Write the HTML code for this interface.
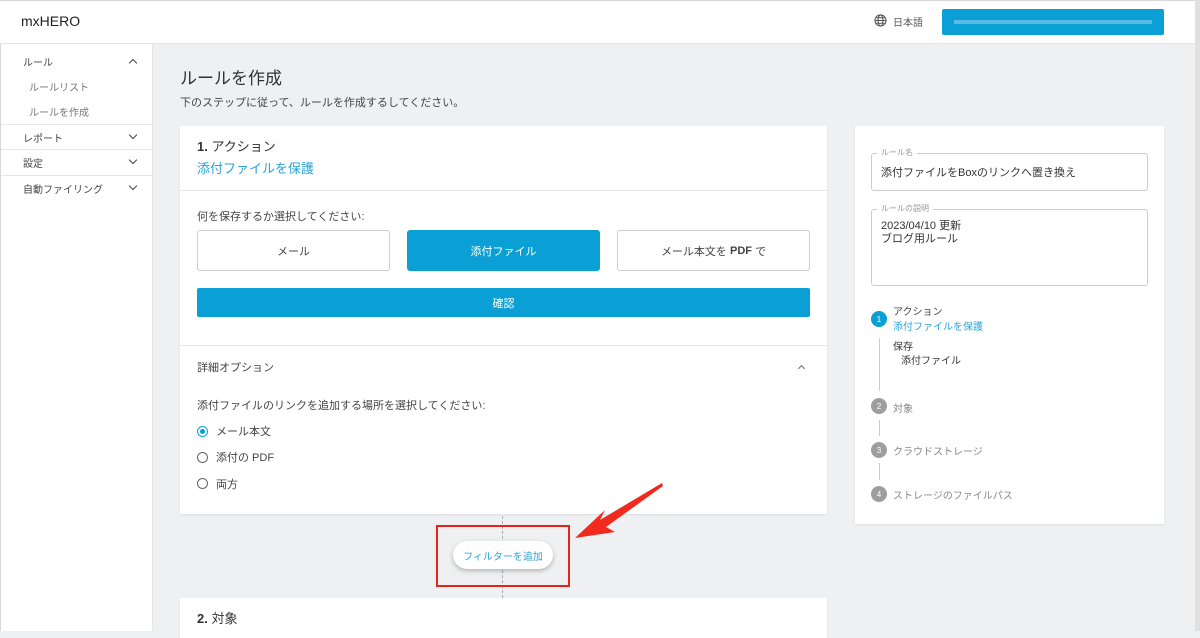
<!DOCTYPE html>
<html><head><meta charset="utf-8"><style>
*{box-sizing:border-box;margin:0;padding:0}
body{width:1200px;height:631px;overflow:hidden;background:#eef0f2;font-family:"Liberation Sans","Noto Sans CJK JP",sans-serif;color:#333;position:relative;font-size:12px}
.abs{position:absolute}
#hdr{left:0;top:0;width:1200px;height:44px;background:#fff;border-bottom:1px solid #e3e5e8;border-top:1px solid #d8d8d8}
#side{left:0;top:44px;width:153px;height:587px;background:#fff;border-right:1px solid #e3e5e8;border-left:1px solid #d8d8d8}
.si{position:absolute;left:0;width:152px;font-size:10px;color:#444}
.chev{position:absolute;right:16px;width:6px;height:6px;border-right:1.5px solid #444;border-bottom:1.5px solid #444}
.card{background:#fff;position:absolute;box-shadow:0 1px 2px rgba(0,0,0,.08)}
.btn{position:absolute;top:230px;height:41px;width:193px;border:1px solid #ccc;border-radius:3px;display:flex;align-items:center;justify-content:center;font-size:11px;color:#444;background:#fff}
.radio{position:absolute;left:197px;width:11px;height:11px;border:1.2px solid #666;border-radius:50%}
.step{position:absolute;left:871px;width:16px;height:16px;border-radius:50%;background:#9e9e9e;color:#fff;font-size:8px;display:flex;align-items:center;justify-content:center}
.sl{position:absolute;left:893px;font-size:10px;color:#888}
.vl{position:absolute;left:879px;width:1px;background:#ccc}
</style></head><body>
<div id="hdr" class="abs">
 <div class="abs" style="left:21px;top:12px;font-size:14px;color:#222">mxHERO</div>
 <svg class="abs" style="left:874px;top:13px" width="13" height="13" viewBox="0 0 14 14" fill="none" stroke="#555" stroke-width="1.1"><circle cx="7" cy="7" r="6"/><ellipse cx="7" cy="7" rx="2.6" ry="6"/><path d="M1 7h12M2 4h10M2 10h10"/></svg>
 <div class="abs" style="left:893px;top:13px;font-size:10px;color:#555">日本語</div>
 <div class="abs" style="left:942px;top:8px;width:222px;height:26px;background:#0a9fd5;border-radius:2px"><div style="margin:11px 12px;height:4px;background:#7cc8ea;opacity:.7"></div></div>
</div>
<div id="side" class="abs">
 <div class="si" style="top:10px;left:22px">ルール</div><div class="chev" style="top:16px;transform:rotate(-135deg)"></div>
 <div class="si" style="top:35px;left:28px;color:#777">ルールリスト</div>
 <div class="si" style="top:60px;left:28px;color:#777">ルールを作成</div>
 <div style="position:absolute;top:80px;left:0;width:152px;border-top:1px solid #e6e6e6"></div>
 <div class="si" style="top:86px;left:22px">レポート</div><div class="chev" style="top:88px;transform:rotate(45deg)"></div>
 <div style="position:absolute;top:105px;left:0;width:152px;border-top:1px solid #e6e6e6"></div>
 <div class="si" style="top:111px;left:22px">設定</div><div class="chev" style="top:113px;transform:rotate(45deg)"></div>
 <div style="position:absolute;top:131px;left:0;width:152px;border-top:1px solid #e6e6e6"></div>
 <div class="si" style="top:137px;left:22px">自動ファイリング</div><div class="chev" style="top:139px;transform:rotate(45deg)"></div>
</div>
<div class="abs" style="left:180px;top:64px;font-size:17px;color:#333">ルールを作成</div>
<div class="abs" style="left:180px;top:94px;font-size:11px;color:#444">下のステップに従って、ルールを作成するしてください。</div>

<div class="card" style="left:180px;top:126px;width:647px;height:388px"></div>
<div class="abs" style="left:197px;top:136px;font-size:13px;color:#333"><b>1.</b> アクション</div>
<div class="abs" style="left:197px;top:158px;font-size:13px;color:#2aa3d8">添付ファイルを保護</div>
<div class="abs" style="left:180px;top:190px;width:647px;border-top:1px solid #e6e6e6"></div>
<div class="abs" style="left:197px;top:208px;font-size:11px;color:#444">何を保存するか選択してください:</div>
<div class="btn" style="left:197px">メール</div>
<div class="btn" style="left:407px;background:#0a9fd5;border-color:#0a9fd5;color:#fff">添付ファイル</div>
<div class="btn" style="left:617px">メール本文を <b>&nbsp;PDF&nbsp;</b> で</div>
<div class="abs" style="left:197px;top:288px;width:613px;height:29px;background:#0a9fd5;border-radius:2px;color:#fff;font-size:11px;display:flex;align-items:center;justify-content:center">確認</div>
<div class="abs" style="left:180px;top:345px;width:647px;border-top:1px solid #e6e6e6"></div>
<div class="abs" style="left:197px;top:359px;font-size:11px;color:#444">詳細オプション</div>
<div class="chev" style="left:799px;top:366px;right:auto;width:5px;height:5px;border-color:#666;transform:rotate(-135deg)"></div>
<div class="abs" style="left:197px;top:397px;font-size:11px;color:#444">添付ファイルのリンクを追加する場所を選択してください:</div>
<div class="radio" style="top:426px;border-color:#0a9fd5"><div style="margin:2px;width:5px;height:5px;border-radius:50%;background:#0a9fd5"></div></div>
<div class="abs" style="left:216px;top:423px;font-size:11px;color:#444">メール本文</div>
<div class="radio" style="top:452px"></div>
<div class="abs" style="left:216px;top:449px;font-size:11px;color:#444">添付の PDF</div>
<div class="radio" style="top:478px"></div>
<div class="abs" style="left:216px;top:476px;font-size:11px;color:#444">両方</div>

<div class="abs" style="left:502px;top:516px;height:82px;border-left:1px dashed #aaa"></div>
<div class="abs" style="left:453px;top:541px;width:100px;height:28px;background:#fff;border-radius:14px;box-shadow:0 2px 5px rgba(0,0,0,.25);color:#2aa3d8;font-size:10px;display:flex;align-items:center;justify-content:center">フィルターを追加</div>
<div class="abs" style="left:436px;top:525px;width:134px;height:62px;border:2px solid #e8211a"></div>
<svg class="abs" style="left:570px;top:480px" width="95" height="65" viewBox="0 0 95 65"><path d="M92 3 L30 40 L35 30 L5 58 L45 52 L36 47 L93 6Z" fill="#f02a1f"/></svg>

<div class="card" style="left:180px;top:598px;width:647px;height:40px"></div>
<div class="abs" style="left:197px;top:608px;font-size:13px;color:#333"><b>2.</b> 対象</div>

<div class="card" style="left:855px;top:126px;width:309px;height:398px"></div>
<div class="abs" style="left:871px;top:153px;width:277px;height:38px;border:1px solid #ccc;border-radius:3px"></div>
<div class="abs" style="left:877px;top:147px;background:#fff;padding:0 4px;font-size:8px;color:#999">ルール名</div>
<div class="abs" style="left:881px;top:164px;font-size:11px;color:#333">添付ファイルをBoxのリンクへ置き換え</div>
<div class="abs" style="left:871px;top:209px;width:277px;height:77px;border:1px solid #ccc;border-radius:3px"></div>
<div class="abs" style="left:877px;top:203px;background:#fff;padding:0 4px;font-size:8px;color:#999">ルールの説明</div>
<div class="abs" style="left:881px;top:220px;font-size:11px;color:#333;line-height:13px">2023/04/10 更新<br>ブログ用ルール</div>
<div class="step" style="top:311px;background:#0a9fd5">1</div>
<div class="sl" style="top:303px;color:#444">アクション</div>
<div class="sl" style="top:318px;color:#2aa3d8">添付ファイルを保護</div>
<div class="vl" style="top:338px;height:53px"></div>
<div class="sl" style="top:338px;color:#333">保存</div>
<div class="sl" style="top:352px;left:901px;color:#333">添付ファイル</div>
<div class="step" style="top:398px">2</div><div class="sl" style="top:400px">対象</div>
<div class="vl" style="top:420px;height:16px"></div>
<div class="step" style="top:442px">3</div><div class="sl" style="top:443px">クラウドストレージ</div>
<div class="vl" style="top:463px;height:17px"></div>
<div class="step" style="top:486px">4</div><div class="sl" style="top:487px">ストレージのファイルパス</div>
<div class="abs" style="left:1195px;top:0;width:5px;height:631px;background:#e0e0e0"></div>
</body></html>
